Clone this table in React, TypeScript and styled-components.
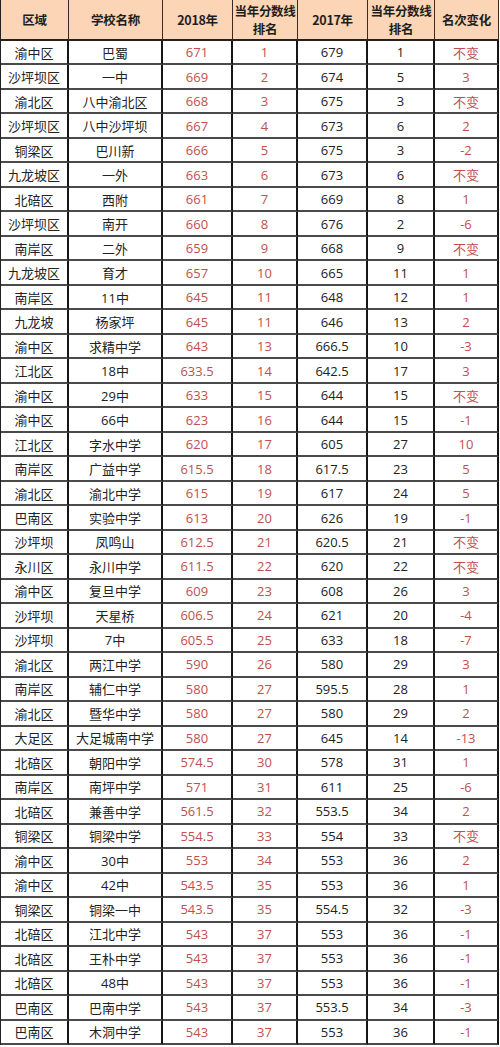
import React from "react";
import styled, { createGlobalStyle } from "styled-components";

const GlobalStyle = createGlobalStyle`
  html, body {
    margin: 0;
    padding: 0;
    background: #ffffff;
  }
`;

type Row = [string, string, string, string, string, string, string];

const rows: Row[] = [
  ["渝中区", "巴蜀", "671", "1", "679", "1", "不变"],
  ["沙坪坝区", "一中", "669", "2", "674", "5", "3"],
  ["渝北区", "八中渝北区", "668", "3", "675", "3", "不变"],
  ["沙坪坝区", "八中沙坪坝", "667", "4", "673", "6", "2"],
  ["铜梁区", "巴川新", "666", "5", "675", "3", "-2"],
  ["九龙坡区", "一外", "663", "6", "673", "6", "不变"],
  ["北碚区", "西附", "661", "7", "669", "8", "1"],
  ["沙坪坝区", "南开", "660", "8", "676", "2", "-6"],
  ["南岸区", "二外", "659", "9", "668", "9", "不变"],
  ["九龙坡区", "育才", "657", "10", "665", "11", "1"],
  ["南岸区", "11中", "645", "11", "648", "12", "1"],
  ["九龙坡", "杨家坪", "645", "11", "646", "13", "2"],
  ["渝中区", "求精中学", "643", "13", "666.5", "10", "-3"],
  ["江北区", "18中", "633.5", "14", "642.5", "17", "3"],
  ["渝中区", "29中", "633", "15", "644", "15", "不变"],
  ["渝中区", "66中", "623", "16", "644", "15", "-1"],
  ["江北区", "字水中学", "620", "17", "605", "27", "10"],
  ["南岸区", "广益中学", "615.5", "18", "617.5", "23", "5"],
  ["渝北区", "渝北中学", "615", "19", "617", "24", "5"],
  ["巴南区", "实验中学", "613", "20", "626", "19", "-1"],
  ["沙坪坝", "凤鸣山", "612.5", "21", "620.5", "21", "不变"],
  ["永川区", "永川中学", "611.5", "22", "620", "22", "不变"],
  ["渝中区", "复旦中学", "609", "23", "608", "26", "3"],
  ["沙坪坝", "天星桥", "606.5", "24", "621", "20", "-4"],
  ["沙坪坝", "7中", "605.5", "25", "633", "18", "-7"],
  ["渝北区", "两江中学", "590", "26", "580", "29", "3"],
  ["南岸区", "辅仁中学", "580", "27", "595.5", "28", "1"],
  ["渝北区", "暨华中学", "580", "27", "580", "29", "2"],
  ["大足区", "大足城南中学", "580", "27", "645", "14", "-13"],
  ["北碚区", "朝阳中学", "574.5", "30", "578", "31", "1"],
  ["南岸区", "南坪中学", "571", "31", "611", "25", "-6"],
  ["北碚区", "兼善中学", "561.5", "32", "553.5", "34", "2"],
  ["铜梁区", "铜梁中学", "554.5", "33", "554", "33", "不变"],
  ["渝中区", "30中", "553", "34", "553", "36", "2"],
  ["渝中区", "42中", "543.5", "35", "553", "36", "1"],
  ["铜梁区", "铜梁一中", "543.5", "35", "554.5", "32", "-3"],
  ["北碚区", "江北中学", "543", "37", "553", "36", "-1"],
  ["北碚区", "王朴中学", "543", "37", "553", "36", "-1"],
  ["北碚区", "48中", "543", "37", "553", "36", "-1"],
  ["巴南区", "巴南中学", "543", "37", "553.5", "34", "-3"],
  ["巴南区", "木洞中学", "543", "37", "553", "36", "-1"],
];

const headers = ["区域", "学校名称", "2018年", "当年分数线\n排名", "2017年", "当年分数线\n排名", "名次变化"];

// columns holding red figures: 2018 score, 2018 rank, rank change
const redColumns = [2, 3, 6];

const Sheet = styled.div`
  display: grid;
  grid-template-columns: 68px 94px 70px 65px 70px 67px 64px;
  grid-template-rows: 41px repeat(41, 1fr);
  width: 498px;
  height: 1045px;
  border-left: 1px solid #222;
  font-family: "Open Sans", "Noto Sans CJK SC", sans-serif;
`;

const HeaderCell = styled.div`
  display: flex;
  align-items: center;
  justify-content: center;
  box-sizing: border-box;
  background: #fbd5b5;
  border-right: 1px solid #3a2a20;
  border-bottom: 2px solid #222;
  font-family: "Noto Sans CJK SC", sans-serif;
  font-weight: 700;
  font-size: 12.5px;
  line-height: 18px;
  letter-spacing: -0.3px;
  color: #1e1e1e;
  text-align: center;
  white-space: pre;
  overflow: hidden;
`;

const Cell = styled.div<{ $red: boolean }>`
  display: flex;
  align-items: center;
  justify-content: center;
  box-sizing: border-box;
  border-right: 2px solid #161616;
  border-bottom: 2px solid #4a4a4a;
  font-size: 13px;
  color: ${(p) => (p.$red ? "#c0504d" : "#222222")};
  white-space: nowrap;
`;

const App: React.FC = () => {
  return (
    <>
      <GlobalStyle />
      <Sheet>
        {headers.map((h) => (
          <HeaderCell key={h}>{h}</HeaderCell>
        ))}
        {rows.map((row, r) =>
          row.map((value, c) => (
            <Cell key={r + "-" + c} $red={redColumns.includes(c)}>
              {value}
            </Cell>
          ))
        )}
      </Sheet>
    </>
  );
};

export default App;
